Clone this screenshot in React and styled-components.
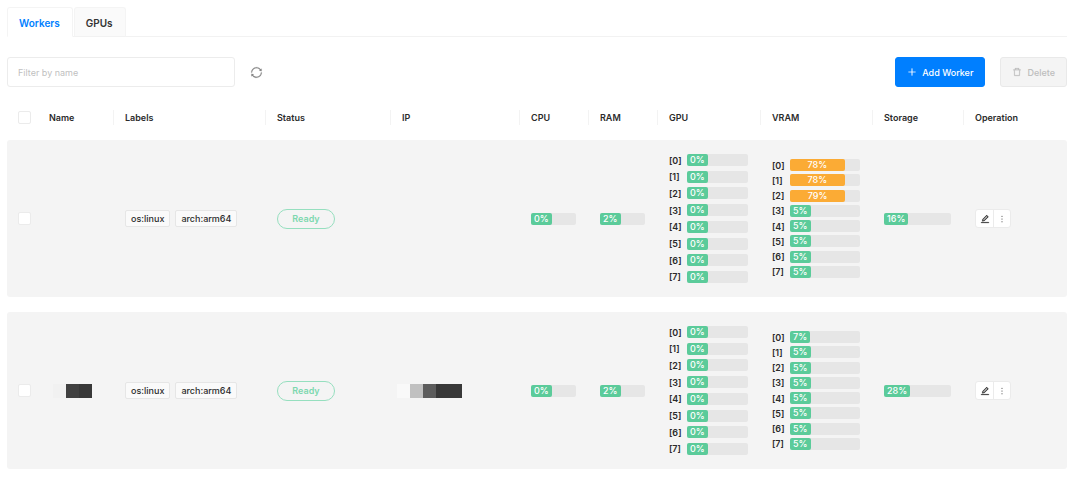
import React, { useState } from 'react';
import styled, { createGlobalStyle } from 'styled-components';
import {
  AiOutlineDelete,
  AiOutlineEdit,
  AiOutlineMore,
  AiOutlinePlus,
  AiOutlineSync,
} from 'react-icons/ai';

const GlobalStyle = createGlobalStyle`
  *, *::before, *::after { box-sizing: border-box; }
  body {
    margin: 0;
    background: #fff;
    color: #2b2b2b;
    font-family: Inter, "Liberation Sans", sans-serif;
    font-size: 9px;
    line-height: 15px;
  }
  button, input { font: inherit; color: inherit; margin: 0; }
`;

const Page = styled.main`
  padding: 7px 13px 9px 7px;
`;

const Tabs = styled.div`
  display: flex;
  gap: 1px;
  border-bottom: 1px solid #f2f2f2;
`;

const Tab = styled.button`
  height: 30px;
  margin-bottom: -1px;
  padding: 2px 12px 0 11px;
  border: 1px solid #f4f4f4;
  border-bottom-color: ${(p) => (p.$active ? '#fff' : '#f2f2f2')};
  border-radius: 3px 3px 0 0;
  background: ${(p) => (p.$active ? '#fff' : '#fafafa')};
  color: ${(p) => (p.$active ? '#007fff' : '#333')};
  font-size: 10px;
  font-weight: 600;
  cursor: pointer;
`;

const Toolbar = styled.div`
  display: flex;
  align-items: center;
  gap: 15px;
  margin-top: 20px;
`;

const Filter = styled.input`
  width: 228px;
  height: 30px;
  padding: 0 10px;
  border: 1px solid #ececec;
  border-radius: 3px;
  background: #fff;
  outline: none;
  &::placeholder { color: #bfbfbf; opacity: 1; }
`;

const RefreshButton = styled.button`
  display: flex;
  margin-right: auto;
  padding: 0;
  border: 0;
  background: none;
  color: #808080;
  font-size: 13px;
  cursor: pointer;
  & > svg { stroke: currentColor; stroke-width: 15; }
`;

const ActionButton = styled.button`
  display: flex;
  align-items: center;
  gap: 5px;
  height: 30px;
  padding: 0 11px;
  border: 1px solid ${(p) => (p.$primary ? '#007fff' : '#e9e9e9')};
  border-radius: 3px;
  background: ${(p) => (p.$primary ? '#007fff' : '#f4f4f4')};
  color: ${(p) => (p.$primary ? '#fff' : '#bdbdbd')};
  font-weight: 500;
  & > svg { font-size: 10px; stroke: currentColor; stroke-width: 20; }
`;

const Table = styled.table`
  width: 100%;
  margin-top: 8px;
  table-layout: fixed;
  border-collapse: separate;
  border-spacing: 0 15px;
`;

const HeadCell = styled.th`
  height: 15px;
  padding: 0 12px 0 11px;
  border-left: 1px solid ${(p) => (p.$divided ? '#f3f3f3' : 'transparent')};
  font-weight: 600;
  line-height: 15px;
  text-align: left;
  &:first-child { padding: 0 0 0 10px; }
`;

const Cell = styled.td`
  height: 157px;
  padding: 0 12px 0 ${(p) => p.$inset || '12px'};
  background: #f4f4f4;
  vertical-align: middle;
  &:first-child { padding: 0 0 0 11px; border-radius: 3px 0 0 3px; }
  &:last-child { border-radius: 0 3px 3px 0; }
`;

const Check = styled.input.attrs({ type: 'checkbox' })`
  appearance: none;
  display: block;
  width: 13px;
  height: 13px;
  border: 1px solid #ebebeb;
  border-radius: 2px;
  background: #fff;
  &:checked { background: #007fff; border-color: #007fff; }
`;

const TagList = styled.div`
  display: flex;
  gap: 5px;
`;

const Tag = styled.span`
  padding: 0 5px;
  border: 1px solid #e6e6e6;
  border-radius: 2px;
  background: #fafafa;
  font-weight: 500;
  line-height: 15px;
  white-space: nowrap;
`;

const Status = styled.span`
  display: block;
  width: 58px;
  border: 1px solid #96dfbf;
  border-radius: 10px;
  color: #7dd8af;
  font-weight: 600;
  line-height: 18px;
  text-align: center;
`;

const Mosaic = styled.div`
  display: flex;
  height: 14px;
`;

const Block = styled.span`
  flex: none;
  width: 13px;
  background: ${(p) => p.$shade};
`;

const Meters = styled.div`
  display: flex;
  flex-direction: column;
  justify-content: space-between;
  height: ${(p) => p.$height};
`;

const MeterRow = styled.div`
  display: flex;
  align-items: center;
  height: 12px;
`;

const MeterLabel = styled.span`
  width: 18px;
  flex: none;
  font-weight: 600;
`;

const Track = styled.div`
  flex: 1;
  height: 12px;
  border-radius: 2px;
  background: #e6e6e6;
`;

const Fill = styled.div`
  min-width: max-content;
  height: 12px;
  padding: 0 3px;
  border-radius: 2px;
  background: ${(p) => (p.$high ? '#fbab35' : '#5bcb9a')};
  color: #fff;
  font-weight: 500;
  line-height: 12px;
  text-align: center;
`;

const ButtonGroup = styled.div`
  display: inline-flex;
  border: 1px solid #ebebeb;
  border-radius: 3px;
  background: #fff;
  vertical-align: middle;
`;

const IconButton = styled.button`
  display: flex;
  align-items: center;
  justify-content: center;
  width: 17px;
  height: 17px;
  padding: 0;
  border: 0;
  background: none;
  font-size: 10px;
  cursor: pointer;
  & > svg { stroke: currentColor; stroke-width: ${(p) => (p.$bold ? 25 : 0)}; }
  & + & { border-left: 1px solid #ebebeb; }
`;

const columns = [
  ['Name', 76],
  ['Labels', 152],
  ['Status', 125],
  ['IP', 129],
  ['CPU', 69],
  ['RAM', 69],
  ['GPU', 103],
  ['VRAM', 112],
  ['Storage', 91],
  ['Operation', 104],
];

const workers = [
  {
    id: 1,
    cpu: 0,
    ram: 2,
    gpu: [0, 0, 0, 0, 0, 0, 0, 0],
    vram: [78, 78, 79, 5, 5, 5, 5, 5],
    storage: 16,
  },
  {
    id: 2,
    name: ['#f4f4f4', '#f1f1f1', '#404040', '#383838'],
    ip: ['#f9f9f9', '#c0c0c0', '#5c5c5c', '#383838', '#383838'],
    cpu: 0,
    ram: 2,
    gpu: [0, 0, 0, 0, 0, 0, 0, 0],
    vram: [7, 5, 5, 5, 5, 5, 5, 5],
    storage: 28,
  },
];

function Meter({ value }) {
  return (
    <Track>
      <Fill $high={value > 70} style={{ width: `${value}%` }}>{value}%</Fill>
    </Track>
  );
}

function MeterList({ values, height }) {
  return (
    <Meters $height={height}>
      {values.map((value, i) => (
        <MeterRow key={i}>
          <MeterLabel>[{i}]</MeterLabel>
          <Meter value={value} />
        </MeterRow>
      ))}
    </Meters>
  );
}

function Redacted({ shades = [] }) {
  return (
    <Mosaic>
      {shades.map((shade, i) => <Block key={i} $shade={shade} />)}
    </Mosaic>
  );
}

function WorkerRow({ worker }) {
  return (
    <tr>
      <Cell><Check aria-label={`Select worker ${worker.id}`} /></Cell>
      <Cell $inset="3px"><Redacted shades={worker.name} /></Cell>
      <Cell>
        <TagList>
          <Tag>os:linux</Tag>
          <Tag>arch:arm64</Tag>
        </TagList>
      </Cell>
      <Cell><Status>Ready</Status></Cell>
      <Cell $inset="7px"><Redacted shades={worker.ip} /></Cell>
      <Cell><Meter value={worker.cpu} /></Cell>
      <Cell><Meter value={worker.ram} /></Cell>
      <Cell><MeterList values={worker.gpu} height="129px" /></Cell>
      <Cell><MeterList values={worker.vram} height="119px" /></Cell>
      <Cell><Meter value={worker.storage} /></Cell>
      <Cell>
        <ButtonGroup>
          <IconButton type="button" aria-label="Edit" $bold><AiOutlineEdit /></IconButton>
          <IconButton type="button" aria-label="More"><AiOutlineMore /></IconButton>
        </ButtonGroup>
      </Cell>
    </tr>
  );
}

export default function App() {
  const [tab, setTab] = useState('Workers');
  return (
    <Page>
      <GlobalStyle />
      <Tabs role="tablist">
        {['Workers', 'GPUs'].map((name) => (
          <Tab
            key={name}
            type="button"
            role="tab"
            aria-selected={tab === name}
            $active={tab === name}
            onClick={() => setTab(name)}
          >
            {name}
          </Tab>
        ))}
      </Tabs>
      <Toolbar>
        <Filter type="text" placeholder="Filter by name" aria-label="Filter by name" />
        <RefreshButton type="button" aria-label="Refresh"><AiOutlineSync /></RefreshButton>
        <ActionButton type="button" $primary><AiOutlinePlus />Add Worker</ActionButton>
        <ActionButton type="button" disabled><AiOutlineDelete />Delete</ActionButton>
      </Toolbar>
      <Table>
        <colgroup>
          <col width="30" />
          {columns.map(([name, width]) => <col key={name} width={width} />)}
        </colgroup>
        <thead>
          <tr>
            <HeadCell><Check aria-label="Select all workers" /></HeadCell>
            {columns.map(([name], i) => (
              <HeadCell key={name} scope="col" $divided={i > 0}>{name}</HeadCell>
            ))}
          </tr>
        </thead>
        <tbody>
          {workers.map((worker) => <WorkerRow key={worker.id} worker={worker} />)}
        </tbody>
      </Table>
    </Page>
  );
}
